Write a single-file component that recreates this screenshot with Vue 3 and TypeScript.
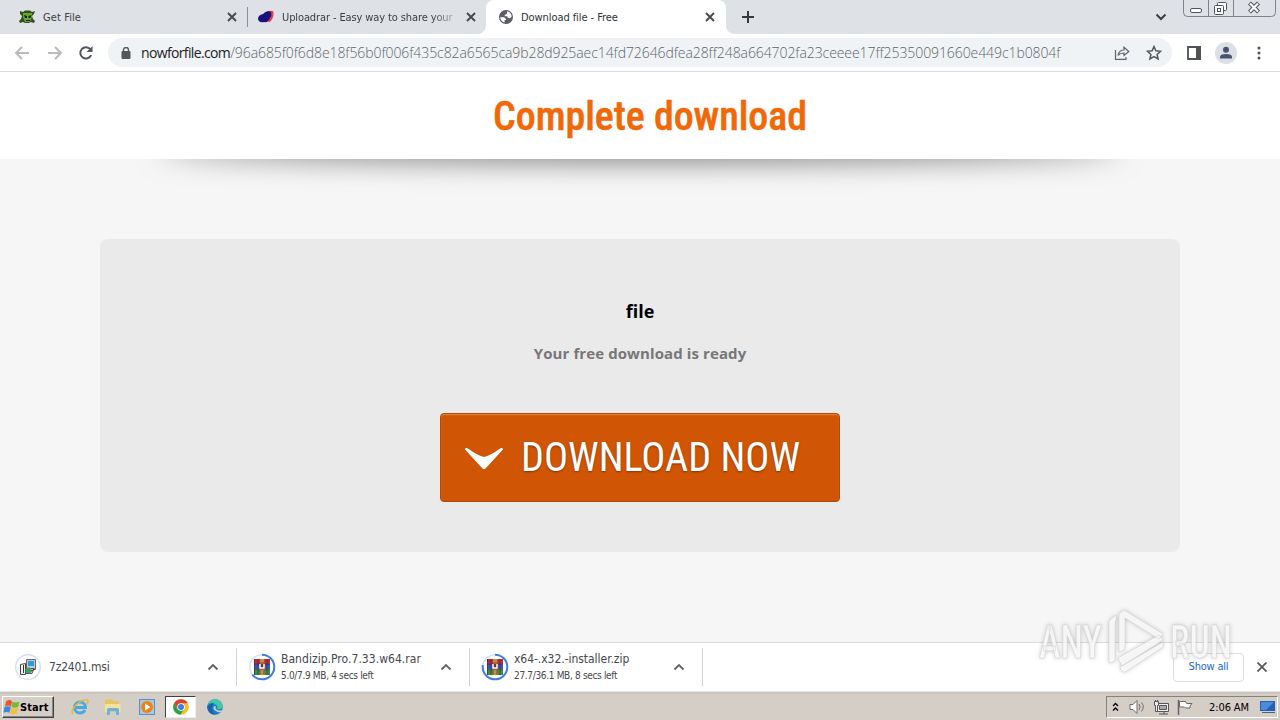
<script setup lang="ts">
interface DownloadItem {
  name: string
  status: string
  kind: 'msi' | 'rar'
  progress: number
  nameClass: string
}

const hostName = 'nowforfile.com'
const path =
  '/96a685f0f6d8e18f56b0f006f435c82a6565ca9b28d925aec14fd72646dfea28ff248a664702fa23ceeee17ff25350091660e449c1b0804f'

const downloads: DownloadItem[] = [
  { name: '7z2401.msi', status: '', kind: 'msi', progress: 1, nameClass: 'n1' },
  { name: 'Bandizip.Pro.7.33.w64.rar', status: '5.0/7.9 MB, 4 secs left', kind: 'rar', progress: 0.64, nameClass: 'n2' },
  { name: 'x64-.x32.-installer.zip', status: '27.7/36.1 MB, 8 secs left', kind: 'rar', progress: 0.77, nameClass: 'n3' },
]
const ring = 2 * Math.PI * 12.3
</script>

<template>
  <div class="screen">
    <div class="tabs">
      <div class="tab first">
        <svg class="fav" width="17" height="16" viewBox="0 0 17 16">
          <path d="M1 2l3 1 2-1.500h5l2 1.500 3-1-1 3-2 2 1 3 2 2-1 2-3-1-2 1H6l-2-1-3 1-1-2 2-2 1-3-2-2z" fill="#31501a" />
          <path d="M4 4h9l0 4-2 5H6L4 8z" fill="#6aa531" />
          <path d="M5 6l3 1v2H6zM9.500 7l3-1-1 3h-2zM7 11h4v1H7z" fill="#16240c" />
        </svg>
        <span class="t1">Get File</span>
        <svg class="x" width="10" height="10" viewBox="0 0 10 10"><path d="M1 1l8 8M9 1l-8 8" /></svg>
      </div>
      <i class="sep"></i>
      <div class="tab second">
        <svg class="fav" width="16" height="16" viewBox="0 0 16 16">
          <path d="M6 4q4-3 9-2 2 5-3 11l-5-1z" fill="#ee3c48" />
          <path d="M5 5q4-4 8-2 1 4-1 6-2 5-6 4-5 1-6-3 0-4 5-5z" fill="#17127c" />
        </svg>
        <span class="t2">Uploadrar - Easy way to share your</span>
        <svg class="x" width="10" height="10" viewBox="0 0 10 10"><path d="M1 1l8 8M9 1l-8 8" /></svg>
      </div>
      <div class="tab active">
        <svg class="fav" width="16" height="16" viewBox="0 0 16 16">
          <circle cx="8" cy="8" r="7" fill="#5a5e63" />
          <path d="M2.200 8.300H6l2 1.600v1.200H6.600v2.300Q2.600 12.500 2.200 8.300zM9 2.300Q13 3.200 13.800 7.500L12 9.300 9.500 8.800V7.200H6.800V5.500H8.300L9 4z" fill="#fff" />
        </svg>
        <span class="t3">Download file - Free</span>
        <svg class="x" width="10" height="10" viewBox="0 0 10 10"><path d="M1 1l8 8M9 1l-8 8" /></svg>
      </div>
      <svg class="plus" width="12" height="12" viewBox="0 0 12 12"><path d="M6 0v12M0 6h12" stroke="#35373a" stroke-width="2" /></svg>
      <div class="grow"></div>
      <svg class="caret" width="12" height="8" viewBox="0 0 12 8"><path d="M1.500 1.500L6 6l4.500-4.500" fill="none" stroke="#3c4043" stroke-width="2" /></svg>
      <svg class="win" width="96" height="18" viewBox="0 0 96 18">
        <g fill="none" stroke="#7d828b">
          <path d="M.5 0v12.500q0 4 4 4h84q4 0 4-4V0M25.500 0v16M50.500 0v16" />
          <rect x="7.500" y="8.500" width="11" height="4" rx="1.500" fill="#fff" stroke="#50555d" />
          <rect x="34.500" y="2.500" width="9" height="8" rx="1" fill="#fff" stroke="#50555d" />
          <rect x="31.500" y="5.500" width="9" height="9" rx="1" fill="#fff" stroke="#50555d" />
          <rect x="34.500" y="8.500" width="3" height="3" stroke="#50555d" />
        </g>
        <path d="M66.500 3l9 9M75.500 3l-9 9" stroke="#50555d" stroke-width="4.200" />
        <path d="M67 3.500l8 8M75 3.500l-8 8" stroke="#fff" stroke-width="2.200" />
      </svg>
    </div>

    <div class="toolbar">
      <svg class="back" width="16" height="14" viewBox="0 0 16 14"><path d="M15 7H2M8 1L2 7l6 6" /></svg>
      <svg class="back fwd" width="16" height="14" viewBox="0 0 16 14"><path d="M1 7h13M8 1l6 6-6 6" /></svg>
      <svg class="reload" width="16" height="16" viewBox="0 0 16 16">
        <path d="M13.200 10.200A5.700 5.700 0 1 1 12.400 4.200" fill="none" stroke="#54575b" stroke-width="2" />
        <path d="M14.500 1v6h-6z" fill="#54575b" />
      </svg>
      <div class="omni">
        <svg class="lock" width="10" height="12" viewBox="0 0 10 12">
          <rect x="0.500" y="4" width="9" height="8" rx="1" fill="#54575b" />
          <path d="M2.500 5V3a2.500 2.500 0 0 1 5 0v2" fill="none" stroke="#54575b" stroke-width="1.400" />
        </svg>
        <span class="url"><b>{{ hostName }}</b>{{ path }}</span>
        <svg class="share" width="16" height="14" viewBox="0 0 16 14" fill="none" stroke="#5f6368" stroke-width="1.200">
          <path d="M1.500 4v9.300H12V11" />
          <path d="M4 9.500q1-5.500 6-5.500V1.200l4.800 4.300L10 9.500V7q-4 0-6 2.500z" />
        </svg>
        <svg class="star" width="16" height="16" viewBox="0 0 16 16">
          <path d="M8 1.500l1.900 4.300 4.700.5-3.500 3.100 1 4.600L8 11.600 3.900 14l1-4.600L1.400 6.300l4.700-.5z" fill="none" stroke="#54575b" stroke-width="1.500" />
        </svg>
      </div>
      <svg class="panel" width="14" height="14" viewBox="0 0 14 14"><path d="M1 1h12v12H1z" fill="none" stroke="#4f5256" stroke-width="1.800" /><path d="M9 0h5v14H9z" fill="#4f5256" /></svg>
      <svg class="avatar" width="22" height="22" viewBox="0 0 22 22">
        <circle cx="11" cy="11" r="11" fill="#dcdfe5" />
        <circle cx="11" cy="7.800" r="3" fill="#47536f" />
        <path d="M5 16.500v-1.500q0-3 6-3t6 3v1.500z" fill="#47536f" />
      </svg>
      <svg class="dots" width="4" height="14" viewBox="0 0 4 14" fill="#4f5256"><circle cx="2" cy="2" r="1.500" /><circle cx="2" cy="7" r="1.500" /><circle cx="2" cy="12" r="1.500" /></svg>
    </div>

    <div class="page">
      <header class="head">
        <svg width="320" height="60" viewBox="0 0 320 60">
          <text x="13" y="42.500" textLength="314" lengthAdjust="spacingAndGlyphs">Complete download</text>
        </svg>
      </header>
      <div class="shade"><i></i></div>
      <main class="card">
        <h2>file</h2>
        <p>Your free download is ready</p>
        <div class="btn">
          <svg class="chev" width="38" height="23" viewBox="0 0 38 23"><path d="M0 1.500Q-.2-.2 2.500.2 13 7.800 19 9 25 7.800 35.500.2 38.200-.2 38 1.500L20.500 20.500Q19 22 17.500 20.500z" fill="#fff" /></svg>
          <svg class="lbl" width="290" height="50" viewBox="0 0 290 50">
            <text x="-1" y="38" textLength="279" lengthAdjust="spacingAndGlyphs">DOWNLOAD NOW</text>
          </svg>
        </div>
      </main>
    </div>

    <div class="shelf">
      <div v-for="d in downloads" :key="d.name" class="dl">
        <svg class="ico" width="28" height="28" viewBox="0 0 28 28">
          <circle cx="14" cy="14" r="12.300" fill="none" stroke="#d3e0f5" stroke-width="1.500" />
          <circle v-if="d.kind === 'rar'" cx="14" cy="14" r="12.300" fill="none" stroke="#3f7de0" stroke-width="2" :stroke-dasharray="`${ring * d.progress} ${ring}`" transform="rotate(-90 14 14)" />
          <g v-if="d.kind === 'msi'">
            <path d="M12.500 6.500h9v10h-9z" fill="#c6cad0" stroke="#666" />
            <path d="M14 8h6v5h-6z" fill="#2f9be0" />
            <path d="M6.500 11.500l5-1v11h-5z" fill="#f1f1ee" stroke="#444" />
            <path d="M12 15.500h8l-2 5h-6z" fill="#d5d8c8" stroke="#555" />
            <circle cx="14.500" cy="17.500" r="3" fill="#39a26a" />
            <path d="M9.500 12v8M17 18l4-2" stroke="#333" />
          </g>
          <g v-else>
            <path d="M6 6h16v5H6z" fill="#b52d3f" />
            <path d="M6 11h16v5.500H6z" fill="#3b57b4" />
            <path d="M6 16.500h16V22H6z" fill="#39913f" />
            <path d="M6.500 6v16M10 6v16M19 6v16M6 11.200h16M6 16.700h16" stroke="#402244" stroke-width=".6" />
            <path d="M12 6h4.500v16H12z" fill="#a86a35" />
            <path d="M11.500 11h5.500v5h-5.500z" fill="#6d3333" />
            <path d="M12 11v4h4v-4" fill="none" stroke="#fff" stroke-width="1.500" />
            <path d="M13 6v3M15 6v3M14 17v5" stroke="#e5ac5a" />
          </g>
        </svg>
        <div class="info">
          <span class="name" :class="d.nameClass">{{ d.name }}</span>
          <span v-if="d.status" class="status">{{ d.status }}</span>
        </div>
        <svg class="up" width="12" height="8" viewBox="0 0 12 8"><path d="M1.500 6.500L6 2l4.500 4.500" fill="none" stroke="#5f6368" stroke-width="1.800" /></svg>
      </div>
      <div class="grow"></div>
      <div class="all"><span>Show all</span></div>
      <svg class="close" width="10" height="10" viewBox="0 0 10 10"><path d="M.5.5l9 9M9.500.5l-9 9" stroke="#54575b" stroke-width="1.800" /></svg>
    </div>

    <div class="taskbar">
      <div class="start">
        <svg width="17" height="16" viewBox="0 0 16 15">
          <path d="M3 2q3-2 5.500 0L7.500 7Q5 5.300 1.800 7z" fill="#e8572a" />
          <path d="M9 2.500Q12 4 15.500 2.500L14.300 7.500Q11 9 8 7.300z" fill="#74b83c" />
          <path d="M1.500 7.600q3-1.500 5.900 0L6 13Q3.500 11.500.3 13z" fill="#3f87d8" />
          <path d="M8 8Q11 10 14 8.200L13 13.300Q9.500 15 6.600 13.300z" fill="#f4c12e" />
        </svg>
        <span>Start</span>
      </div>
      <svg class="q q1" width="18" height="18" viewBox="0 0 18 18">
        <path d="M14 12Q12.500 15 9 15A5.500 5.500 0 1 1 14.500 9.500H5" fill="none" stroke="#4aa9de" stroke-width="2.800" />
        <path d="M2 16Q-1 13 5 7T16.500 2Q18 4 15.500 6.500" fill="none" stroke="#e4b83e" stroke-width="1.400" />
      </svg>
      <svg class="q q2" width="18" height="18" viewBox="0 0 18 18">
        <path d="M1 3q0-1.500 1.500-1.500h5L9 3h6v9H1z" fill="#e3c565" />
        <path d="M1 6h15.500v8H1z" fill="#f4e19c" />
        <path d="M3 17v-5.500q0-1.500 1.500-1.500h9q1.500 0 1.500 1.500V17h-3v-3.500H6V17z" fill="#6fb2d8" />
      </svg>
      <svg class="q q3" width="18" height="18" viewBox="0 0 18 18">
        <rect x="1.500" y="1.500" width="15" height="15" fill="#a5c9e8" stroke="#5b8fc2" />
        <circle cx="9" cy="9" r="6" fill="#ee8413" /><path d="M7 5.500l5.500 3.500L7 12.500z" fill="#fff" />
      </svg>
      <div class="chromebox">
        <svg width="16" height="16" viewBox="0 0 16 16">
          <circle cx="8" cy="8" r="7.800" fill="#f3c227" />
          <path d="M1.200 4.100A7.800 7.800 0 0 1 14.800 4.200H8L4.700 9.900z" fill="#df4030" />
          <path d="M1.200 4.100A7.800 7.800 0 0 0 7.500 15.800L11 10 8 11.500 4.800 9.800z" fill="#2da04e" />
          <circle cx="8" cy="8" r="3.800" fill="#fff" /><circle cx="8" cy="8" r="3" fill="#3c7ee6" />
        </svg>
      </div>
      <svg class="q q5" width="16" height="16" viewBox="0 0 16 16">
        <circle cx="8" cy="8" r="7.800" fill="#1681cb" />
        <path d="M.5 7Q2 .3 8.500.2q6 .5 7.300 6.800Q15.500 11 10 10q1.500-2-.5-4T.5 7z" fill="#43c7a4" />
        <path d="M.5 7Q3 3 7.500 4.500 4 7 5.500 11.500T10 15.500Q2 16.500.3 9z" fill="#1764ad" />
        <path d="M9 7.500q-1.500 1.500 1 3.500 2 1 6 .3l-.8 1.700q-3 .6-5-.3Q6 11 6.500 8.500T9 7.500z" fill="#d5cec6" />
      </svg>
      <div class="grow"></div>
      <div class="tray">
        <svg class="tr1" width="7" height="10" viewBox="0 0 7 10"><path d="M1 4l2.500-2.500L6 4M1 8.500L3.500 6 6 8.500" fill="none" stroke="#000" stroke-width="1.400" /></svg>
        <svg class="tr2" width="17" height="14" viewBox="0 0 17 14" fill="#fff" stroke="#6c6c6c"><path d="M1 4.500h3l4-4v13l-4-4H1z" /><path d="M10 4q2 3 0 6M12.500 2.500q3.500 4.500 0 9" fill="none" /></svg>
        <svg class="tr3" width="17" height="15" viewBox="0 0 17 15" fill="#eee" stroke="#555"><path d="M4.500 3.500h11v8h-11zM6 14h9M11 12v2" /><path d="M6.500 5.500h7v4h-7z" fill="#aaa" /><path d="M1.500 1.500h4v4h-1v6h-2v-6h-1z" /><path d="M2.500 0v1.500M4.500 0v1.500" /></svg>
        <svg class="tr4" width="16" height="15" viewBox="0 0 16 15" fill="#fff" stroke="#666"><path d="M1.500 0v15" stroke-width="1.500" /><path d="M2.500 1.500h6l1 2h5.500l-2 2.500 0 2H8.500l-1-1h-5z" /></svg>
        <span>2:06 AM</span>
        <svg class="tr5" width="16" height="14" viewBox="0 0 16 14"><path d="M0 1h15v10H0z" fill="#2460b5" /><path d="M1 2h13L6 10H1z" fill="#4c8bdb" /><path d="M2 12h13v1H2z" fill="#50617b" /></svg>
      </div>
    </div>

    <svg class="mark" width="200" height="68" viewBox="0 0 200 68">
      <g class="markin">
        <text x="2" y="48" textLength="63" lengthAdjust="spacingAndGlyphs">ANY</text>
        <text x="133" y="48" textLength="62" lengthAdjust="spacingAndGlyphs">RUN</text>
        <path d="M72 53V11l7-6v4l-1 4v38zM82 42V4l5-4 39 24-4 5-34-21v27l-1 5zM81 48l41-23 4 5-41 26zM83 57l43-25v5L88 62q-4 0-5-5z" />
      </g>
    </svg>
  </div>
</template>

<style>
html, body { margin: 0; overflow: hidden; }
</style>

<style scoped>
.screen { position: relative; width: 1280px; height: 720px; display: flex; flex-direction: column; overflow: hidden; background: #f6f6f6; font-family: "DejaVu Sans Condensed", "DejaVu Sans", sans-serif; font-stretch: condensed; }
svg { display: block; flex: none; }
span { white-space: nowrap; }
.grow { flex: 1; }
.tabs { height: 34px; flex: none; display: flex; align-items: flex-start; background: #dee1e6; font-size: 11px; color: #3c4043; }
.tab { display: flex; align-items: center; height: 34px; box-sizing: border-box; }
.tab span { flex: 1; margin-left: 8px; }
.x { fill: none; stroke: #45484c; stroke-width: 1.9; }
.first { width: 247px; padding: 0 10px 0 19px; }
.first .t1 { margin-left: 7px; }
.sep { width: 1px; height: 20px; margin-top: 7px; background: #8b8f96; }
.second { width: 238px; padding: 0 10px 0 10px; }
.second span { margin-right: 13px; -webkit-mask-image: linear-gradient(90deg, #000 88%, rgba(0, 0, 0, .3) 100%); mask-image: linear-gradient(90deg, #000 88%, rgba(0, 0, 0, .3) 100%); }
.t1 { letter-spacing: .1px; }
.t2 { letter-spacing: -.11px; }
.active .t3 { letter-spacing: -.07px; margin-left: 7px; }
.active { width: 240px; padding: 0 11px 0 12px; background: #fff; border-radius: 8px 8px 0 0; color: #303236; position: relative; }
.active::before, .active::after { content: ''; position: absolute; bottom: 0; width: 8px; height: 8px; }
.active::before { left: -8px; background: radial-gradient(circle at 0 0, transparent 7.5px, #fff 8px); }
.active::after { right: -8px; background: radial-gradient(circle at 100% 0, transparent 7.5px, #fff 8px); }
.plus { margin: 11px 0 0 16px; }
.caret { margin: 13px 17px 0 0; }
.win { margin-left: -1px; margin-right: 1px; }
.toolbar { height: 37px; flex: none; display: flex; align-items: center; background: #fff; border-bottom: 1px solid #d9dadc; }
.back { margin-left: 14px; fill: none; stroke: #b8babd; stroke-width: 1.9; }
.fwd { margin-left: 17px; }
.reload { margin-left: 15px; }
.omni { width: 1064px; height: 29px; margin-left: 14px; border-radius: 15px; background: #f0f3f5; display: flex; align-items: center; }
.lock { margin: 0 10px 0 13px; }
.url { width: 973px; font-size: 14px; color: #5f6469; letter-spacing: -.085px; font-family: "Open Sans", sans-serif; font-weight: 300; font-stretch: normal; }
.url b { color: #202124; font-weight: 400; letter-spacing: -.64px; }
.star { margin-left: 16px; }
.panel { margin-left: 15px; }
.avatar { margin-left: 14px; }
.dots { margin-left: 20px; }
.page { height: 570px; flex: none; position: relative; }
.head { height: 87px; background: #fff; display: flex; justify-content: center; padding-top: 0; box-sizing: border-box; }
.head svg { margin-top: 15px; overflow: visible; }
.head text { font: 500 41px "Roboto Condensed", Roboto, sans-serif; font-stretch: condensed; fill: #f06808; stroke: #f06808; stroke-width: .5; }
.shade { height: 80px; overflow: hidden; position: relative; }
.shade i { position: absolute; left: 160px; top: -24px; width: 960px; height: 24px; border-radius: 50%; box-shadow: 0 0 30px rgba(0, 0, 0, .6); }
.card { width: 1080px; height: 313px; margin: 0 auto; border-radius: 8px; background: #eaeaea; display: flex; flex-direction: column; align-items: center; font-family: "Open Sans", sans-serif; font-stretch: normal; }
.card h2 { margin: 60px 0 0; font-size: 18px; line-height: 24px; font-weight: 700; color: #000; }
.card p { margin: 20px 0 0; font-size: 15px; line-height: 20px; font-weight: 700; color: #777; letter-spacing: .1px; }
.btn { width: 400px; height: 89px; margin-top: 50px; box-sizing: border-box; border: 1px solid #ac4b0b; border-radius: 4px; background: #d05605; box-shadow: inset 0 1px 1px #e58742; display: flex; align-items: center; }
.chev { margin-left: 24px; margin-top: 4px; }
.lbl { margin-left: 19px; overflow: visible; }
.lbl text { font: 400 40px "Roboto Condensed", Roboto, sans-serif; font-stretch: condensed; fill: #fff; text-shadow: 0 1px 2px rgba(80, 30, 0, .6); }
.shelf { height: 48px; flex: none; border-top: 1px solid #d9dadc; border-bottom: 1px solid #e4e4e4; background: #fff; display: flex; align-items: center; color: #45484c; }
.dl { width: 232px; height: 38px; border-right: 1px solid #d0d2d5; display: flex; align-items: center; }
.dl:first-child { width: 236px; }
.ico { margin-left: 11px; }
.dl:first-child .ico { margin-left: 14px; }
.info { flex: 1; margin-left: 5px; display: flex; flex-direction: column; }
.dl:first-child .info { margin-left: 7px; }
.name { font-size: 12px; line-height: 17px; margin-top: -1px; }
.n1 { letter-spacing: -.2px; margin-top: 1px; }
.n2 { letter-spacing: .04px; }
.n3 { letter-spacing: -.04px; }
.status { font-size: 10px; line-height: 14px; margin-top: 1px; letter-spacing: -.33px; }
.up { margin-right: 17px; }
.all { width: 69px; height: 27px; border: 1px solid #dadce0; border-radius: 4px; display: flex; align-items: center; justify-content: center; color: #1967d2; font-size: 11px; letter-spacing: -.2px; }
.all span { margin-top: -2px; }
.close { margin: 0 13px; }
.taskbar { height: 28px; flex: none; box-sizing: border-box; background: #d5cec6; border-top: 2px solid #c9c5be; display: flex; align-items: center; }
.start { width: 52px; height: 22px; box-sizing: border-box; margin-left: 2px; border: 1px solid; border-color: #fff #404040 #404040 #fff; box-shadow: inset -1px -1px #898580; display: flex; align-items: center; padding-left: 0; font-size: 11px; font-weight: 700; color: #000; }
.start span { letter-spacing: .1px; margin-left: 0; }
.q1 { margin-left: 17px; }
.q2 { margin-left: 15px; }
.q3 { margin-left: 16px; }
.chromebox { width: 31px; height: 22px; box-sizing: border-box; margin-left: 9px; background: #fff; border: 1px solid; border-color: #404040 #eee #eee #404040; display: flex; align-items: center; justify-content: center; }
.q5 { margin-left: 11px; }
.tray { width: 172px; height: 22px; box-sizing: border-box; border: 1px solid; border-color: #85817b #fff #fff #85817b; margin-right: 2px; display: flex; align-items: center; font-size: 11px; color: #000; }
.tr1 { margin-left: 5px; }
.tr2 { margin-left: 10px; }
.tr3 { margin-left: 7px; }
.tr4 { margin-left: 7px; }
.tray span { flex: 1; margin-left: 16px; letter-spacing: -.1px; }
.tr5 { margin-right: 1px; }
.mark { position: absolute; left: 1037px; top: 610px; overflow: visible; }
.markin { fill: rgba(255, 255, 255, .8); stroke: rgba(205, 205, 205, .5); stroke-width: 1; filter: drop-shadow(0 0 2px rgba(100, 100, 100, .4)); }
.markin text { font: 500 46px "Roboto Condensed", Roboto, sans-serif; font-stretch: condensed; }
</style>
